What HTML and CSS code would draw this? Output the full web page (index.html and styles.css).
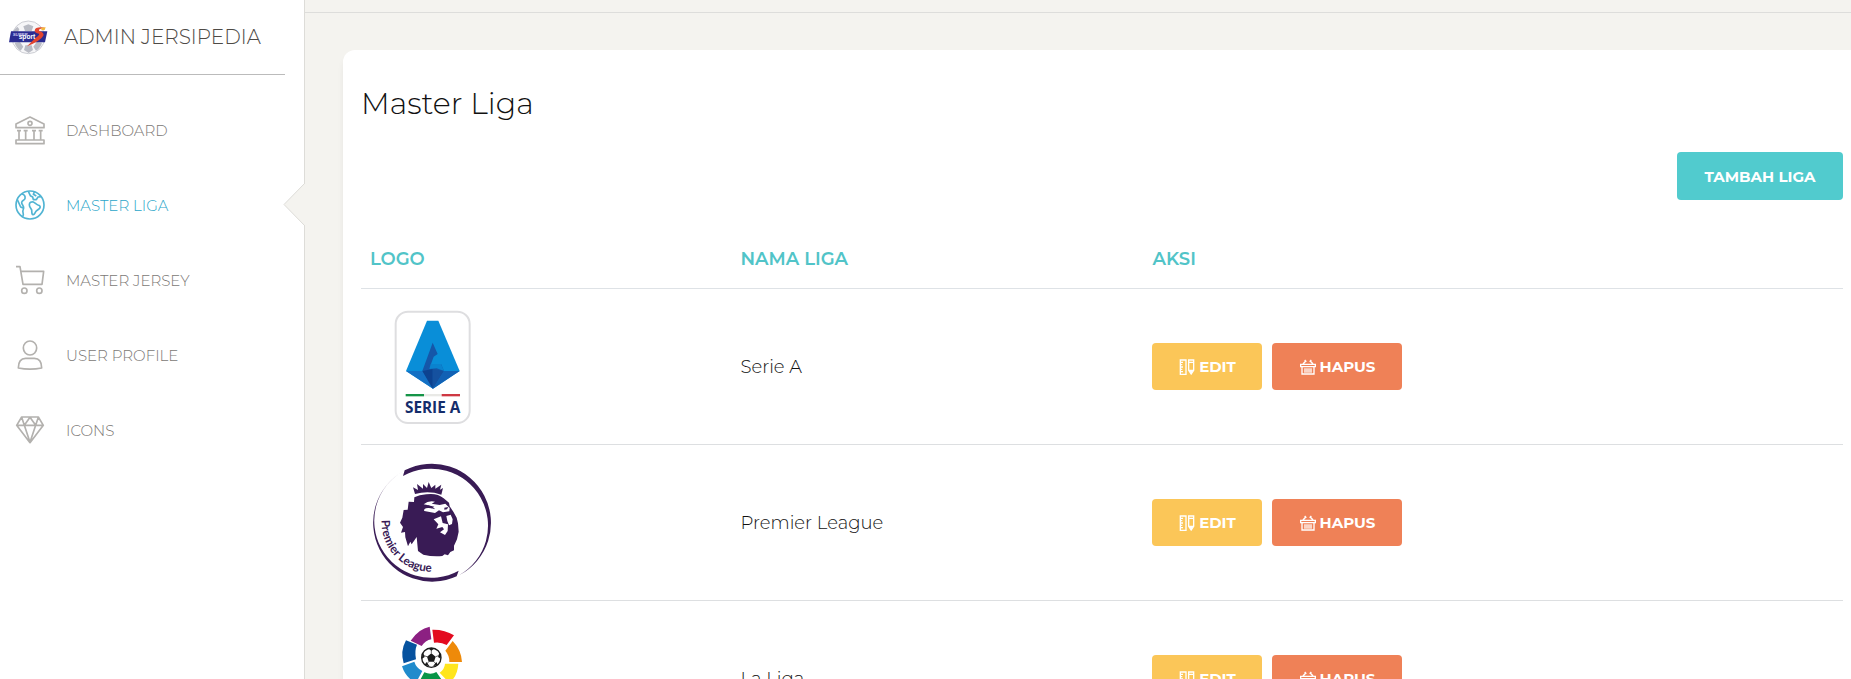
FILE: index.html
```html
<!DOCTYPE html>
<html lang="id">
<head>
<meta charset="utf-8">
<meta name="viewport" content="width=device-width, initial-scale=1">
<title>Master Liga - Admin Jersipedia</title>
<link rel="stylesheet" href="styles.css">
</head>
<body>
<svg class="sprite" aria-hidden="true">
  <symbol id="i-edit" viewBox="119 112 48 48">
    <path d="M123 115h17v43h-17zM123 122h8M123 129h6M123 136h8M123 143h6M123 150h8M148 115h15v31l-7.500 11-7.500-11zM148 122h15M150 146h11" fill="none" stroke="currentColor" stroke-width="4"/>
    <path d="M150 147h11l-5.500 10z" fill="currentColor"/>
  </symbol>
  <symbol id="i-basket" viewBox="482 112 48 48">
    <path d="M484 128h44v7h-44zM488 135v22h36v-22M497 140v13M503 140v13M509 140v13M515 140v13M491 127l8-9M521 127l-8-9M496 115l5 5M516 115l-5 5" fill="none" stroke="currentColor" stroke-width="4"/>
  </symbol>
</svg>
<div class="app">
  <aside class="sidebar">
    <a class="brand" href="#">
      <svg class="brand-logo" viewBox="24 50 120 114" role="img" aria-label="Super Sport">
        <circle cx="85" cy="108" r="49" fill="#f6f6f8" stroke="#c3c4cb" stroke-width="2.500"/>
        <path d="M70 75l15-6 15 6-5 14H75zM44 124l16-2 10 14-8 12q-14-9-18-24zM126 124l-16-2-10 14 8 12q14-9 18-24zM76 132h19l4 14-13 9-14-9zM42 86l10-10 6 8-4 8H42z" fill="#b9bbc4"/>
        <path d="M33 90h109l-7 33H27z" fill="#2b2c91"/>
        <path d="M136 79q-31-4-32 9 1 7 13 9 3 3-10 12l-26 26q42-18 49-32 4-9-13-15-3-6 18-9z" fill="#e2442f"/>
        <path d="M123 79l14-1-3 8-9 1z" fill="#f3b73c"/>
        <text x="38" y="103" class="logo-super">SUPER</text>
        <text x="56" y="114" class="logo-sport">sport</text>
      </svg>
      <span>ADMIN JERSIPEDIA</span>
    </a>
    <nav class="menu">
      <a class="menu-item" href="#">
        <svg viewBox="46 46 90 90"><path d="M49 73l42-21 42 21v11H49zM49 121h84v11H49zM58 93v28M78 93v28M103 93v28M123 93v28M52 93h12M72 93h12M97 93h12M117 93h12"/><circle cx="91" cy="71" r="6"/></svg>
        <span>DASHBOARD</span>
      </a>
      <a class="menu-item active" href="#">
        <svg viewBox="46 271 90 90"><circle cx="91" cy="316" r="42"/><path d="M67 283c8 2 10 9 9 14s-9 5-10 11 7 10 6 17-4 8-2 13 2 9-2 14M53 300l10 22 7 3M86 275l6 13 7 4 2 8 9 0 5-8 10-1M104 277l-3 7 9 5M89 315c0-7 6-9 12-8 6 3 8 7 14 9 8 2 8 7 4 11s-8 5-11 9-3 10-8 9-3-9-4-14-7-8-7-16z"/></svg>
        <span>MASTER LIGA</span>
      </a>
      <a class="menu-item" href="#">
        <svg viewBox="46 496 90 90"><path d="M49 501h12l9 53h57l5-39H64"/><circle cx="74" cy="573" r="8"/><circle cx="119" cy="573" r="8"/></svg>
        <span>MASTER JERSEY</span>
      </a>
      <a class="menu-item" href="#">
        <svg viewBox="46 121 90 90"><ellipse cx="91" cy="145" rx="20" ry="21"/><path d="M56 205c0-19 9-29 22-29h26c13 0 22 10 22 29-20 4-50 4-70 0z"/></svg>
        <span>USER PROFILE</span>
      </a>
      <a class="menu-item" href="#">
        <svg viewBox="46 346 90 90"><path d="M66 352h50l15 25-40 52-40-52zM51 377h80M66 353l8 24 17-24 17 24 8-24M74 377l17 51 17-51"/></svg>
        <span>ICONS</span>
      </a>
    </nav>
    <svg class="pointer" viewBox="0 0 22 43" aria-hidden="true"><path d="M22 0L1 21.500 22 43" fill="#f4f3ef" stroke="#dddcd8"/></svg>
  </aside>
  <main class="main">
    <header class="topbar"></header>
    <section class="card">
      <h1 class="title">Master Liga</h1>
      <div class="actions"><button class="btn btn-add" type="button">TAMBAH LIGA</button></div>
      <table class="table">
        <thead><tr><th class="col-logo" scope="col">LOGO</th><th class="col-name" scope="col">NAMA LIGA</th><th scope="col">AKSI</th></tr></thead>
        <tbody>
          <tr>
            <td>
              <svg class="crest" viewBox="30 21 372 417" role="img" aria-label="Serie A">
                <rect x="107" y="65" width="222" height="334" rx="37" fill="#fff" stroke="#dedee0" stroke-width="6"/>
                <path d="M201 92h34l64 151-80 53-81-53z" fill="#098ed8"/>
                <path d="M218 158l15 34-12 8-11 30-23 13z" fill="#1557a9"/>
                <path d="M210 222h33l9 21-33 53-32-53z" fill="#1557a9"/>
                <path d="M212 222h31l9 21-22-8-22 2z" fill="#0a83cf"/>
                <path d="M138 243h49l32 53z" fill="#1470c4"/>
                <path d="M299 243h-48l-32 53z" fill="#1261b4"/>
                <path d="M187 243l31-6v59z" fill="#0d4290"/>
                <path d="M251 243l-33-6v59z" fill="#15519f"/>
                <path d="M137 312h55v7h-55z" fill="#159447"/><path d="M192 312h53v7h-53z" fill="#e9e9e6"/><path d="M245 312h55v7h-55z" fill="#ce3843"/>
                <text x="218" y="370" text-anchor="middle" class="serie-text">SERIE A</text>
              </svg>
            </td>
            <td>Serie A</td>
            <td><div class="row-actions">
              <button class="btn btn-edit" type="button"><svg><use href="#i-edit"/></svg>EDIT</button>
              <button class="btn btn-delete" type="button"><svg><use href="#i-basket"/></svg>HAPUS</button>
            </div></td>
          </tr>
          <tr>
            <td>
              <svg class="crest" viewBox="33 6 372 417" role="img" aria-label="Premier League">
                <path d="M137 58A177 177 0 0 1 300 373A170 170 0 0 0 132 75z" fill="#391b55"/>
                <path d="M293 376A177 177 0 0 1 134 60A169 169 0 0 0 299 359z" fill="#391b55"/>
                <path d="M168 129l-6-20 15 8-3-18 18 14 0-14 12 12 5-18 8 18 12-10 0 12 18-12-4 15 9-5-5 20q-38-13-79-2z" fill="#391b55"/>
                <path d="M166 139q15-8 36-9 32-5 52 12l16 13 2 11 11 16 10 18 4 17 2 25-5 23-9 19 0 14-11 5-7 10-10-3-7 5q-28 3-57-4l-16-11-4-42-15 22-4-8-7 14-8-27-1-16-12 2 6-17-9-13 7-15 4-23 12-1 3-24 16 1z" fill="#391b55"/>
                <path d="M194 160q14-12 34-8l-10 6 24 4 17-4 13 13-1 10-19 3-12-6-12 8-32-6q-3-5 5-8 8-3 28 3-12-12-35-15zM224 205l22-9 5 20 16 4-1 20-8 12-15-8 12-9-5-7-18 5 6-13zM262 195l13-4 6 14-2 14-9 4-5-13z" fill="#fff"/>
                <path d="M207 163l19 4-8 5-14-3zM256 170l12-2-4 7-8 1z" fill="#391b55"/>
                <path id="premier-arc" d="M68 207A148 148 0 0 0 236 361" fill="none"/>
                <text class="premier-text"><textPath href="#premier-arc">Premier League</textPath></text>
              </svg>
            </td>
            <td>Premier League</td>
            <td><div class="row-actions">
              <button class="btn btn-edit" type="button"><svg><use href="#i-edit"/></svg>EDIT</button>
              <button class="btn btn-delete" type="button"><svg><use href="#i-basket"/></svg>HAPUS</button>
            </div></td>
          </tr>
          <tr>
            <td>
              <svg class="crest" viewBox="30 57 372 417" role="img" aria-label="La Liga">
                <path d="M152 152q24-36 57-42l5 38q-18 3-29 20z" fill="#8c2082"/>
                <path d="M217 119q37-1 65 17l-22 29q-17-10-38-7z" fill="#e30b20"/>
                <path d="M278 153q26 27 28 63h-38q1-19-12-34z" fill="#ee8a0a"/>
                <path d="M255 221h40q-2 37-27 58l-29-31q15-11 16-27z" fill="#ffe51c"/>
                <path d="M193 247q20 9 36-1l24 35q-40 23-79 1z" fill="#079447"/>
                <path d="M126 229l37-14q5 18 24 28l-19 35q-31-14-42-49z" fill="#208bcc"/>
                <path d="M138 151l33 13q-8 18-3 44l-37 12q-11-36 7-69z" fill="#06529f"/>
                <circle cx="214" cy="203" r="29" fill="#fff" stroke="#1b1b1b" stroke-width="4"/>
                <path d="M214 190l13 10-5 15h-16l-5-15zM203 174h22l-11 8zM239 186l4 21-9-6zM189 186l-4 21 9-6zM194 225l5-9 10 13zM234 225l-5-9-10 13z" fill="#1b1b1b"/>
                <path d="M214 190v-10M227 200l9-3M222 215l7 9M206 215l-7 9M201 200l-9-3" stroke="#1b1b1b" stroke-width="2"/>
              </svg>
            </td>
            <td>La Liga</td>
            <td><div class="row-actions">
              <button class="btn btn-edit" type="button"><svg><use href="#i-edit"/></svg>EDIT</button>
              <button class="btn btn-delete" type="button"><svg><use href="#i-basket"/></svg>HAPUS</button>
            </div></td>
          </tr>
        </tbody>
      </table>
    </section>
  </main>
</div>
</body>
</html>
```
FILE: styles.css
```css
* { box-sizing: border-box; }

body {
  margin: 0;
  background: #f4f3ef;
  color: #212529;
  font-family: Montserrat, Inter, "Open Sans", sans-serif;
  font-size: 18px;
  font-weight: 300;
}

.sprite { position: absolute; width: 0; height: 0; }

.app { display: flex; height: 100vh; overflow: hidden; }

.sidebar {
  position: relative;
  flex: 0 0 305px;
  background: #fff;
  border-right: 1px solid #dddcd8;
}

.brand {
  display: flex;
  align-items: center;
  gap: 16px;
  height: 75px;
  margin-right: 19px;
  padding: 0 8px;
  border-bottom: 1px solid #bbb;
  color: #4e4a46;
  font-size: 20px;
  text-decoration: none;
}
.brand-logo { width: 40px; height: 38px; }
.logo-super { font: italic 700 13px "Liberation Sans", sans-serif; fill: #c9caf0; }
.logo-sport { font: 700 20px "Liberation Sans", sans-serif; fill: #fff; }

.menu { display: flex; flex-direction: column; gap: 45px; padding: 40px 15px; }
.menu-item {
  display: flex;
  align-items: center;
  gap: 21px;
  height: 30px;
  color: #7b7875;
  font-size: 15px;
  text-decoration: none;
}
.menu-item svg {
  width: 30px;
  height: 30px;
  fill: none;
  stroke: #b3b1ae;
  stroke-width: 5;
  stroke-linejoin: round;
}
.menu-item.active { color: #2ba6c9; }
.menu-item.active svg { stroke: #51b4d3; }

.pointer { position: absolute; top: 183px; right: -1px; width: 22px; height: 43px; }

.main { flex: 1; min-width: 0; overflow: hidden; }
.topbar { height: 13px; border-bottom: 1px solid #dddddb; }

.card {
  margin: 37px 0 0 38px;
  padding: 36px 8px 18px 18px;
  background: #fff;
  border-radius: 12px 0 0 12px;
  box-shadow: 0 6px 10px -4px rgba(0, 0, 0, 0.15);
}
.title { margin: 0; color: #111; font-size: 30px; font-weight: 300; line-height: 36px; }
.actions { display: flex; justify-content: flex-end; margin: 30px 0; }

.btn {
  display: flex;
  align-items: center;
  justify-content: center;
  gap: 4px;
  height: 47px;
  padding: 0;
  border: 0;
  border-radius: 4px;
  color: #fff;
  font: inherit;
  font-size: 15px;
  font-weight: 700;
  cursor: pointer;
}
.btn svg { width: 16px; height: 16px; }
.btn-add { width: 166px; height: 48px; background: #51cbce; }
.btn-edit { width: 110px; background: #fbc658; }
.btn-delete { width: 130px; background: #ef8157; }

.table { width: 100%; border-collapse: separate; border-spacing: 0; table-layout: fixed; }
.table th {
  height: 59px;
  padding: 0 9px;
  border-bottom: 1px solid #dee2e6;
  color: #51c4c8;
  font-size: 18px;
  font-weight: 600;
  text-align: left;
}
.table td {
  padding: 8px 9px;
  border-bottom: 1px solid #dddfe1;
  color: #111;
  vertical-align: middle;
}
.col-logo { width: 25%; }
.col-name { width: 27.8%; }
.row-actions { display: flex; gap: 10px; }

.crest { display: block; width: 124px; height: 139px; }
.serie-text { font: 700 46px "Open Sans", sans-serif; fill: #142d6b; }
.premier-text { font: 700 35px Lato, sans-serif; fill: #391b55; }
```
